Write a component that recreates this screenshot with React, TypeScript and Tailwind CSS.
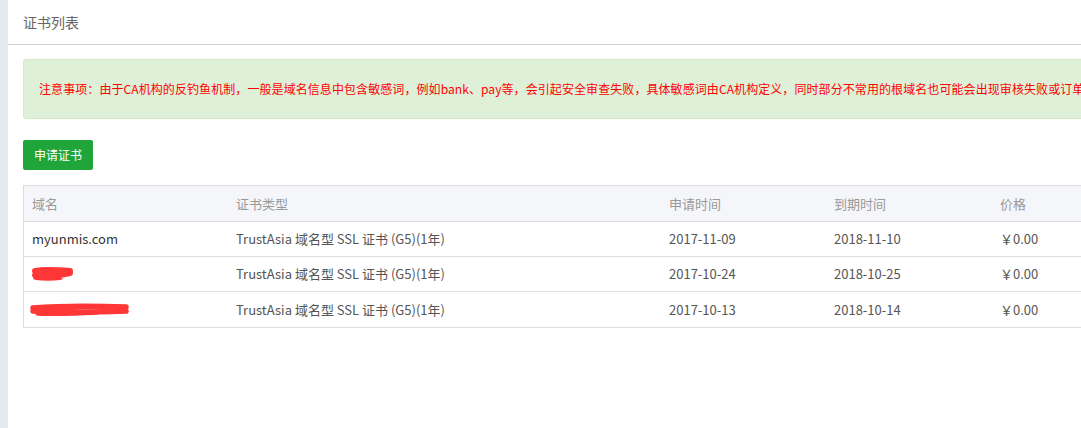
const rows = [
  { domain: "myunmis.com", type: "TrustAsia 域名型 SSL 证书 (G5)(1年)", start: "2017-11-09", end: "2018-11-10", price: "￥0.00", mark: 0 },
  { domain: "", type: "TrustAsia 域名型 SSL 证书 (G5)(1年)", start: "2017-10-24", end: "2018-10-25", price: "￥0.00", mark: 1 },
  { domain: "", type: "TrustAsia 域名型 SSL 证书 (G5)(1年)", start: "2017-10-13", end: "2018-10-14", price: "￥0.00", mark: 2 },
];

const cols = "grid grid-cols-[212px_433px_165px_166px_200px]";

function Scribble({ kind }: { kind: number }) {
  if (kind === 1) {
    return (
      <svg width="46" height="16" viewBox="0 0 46 16" className="block -ml-[2px]">
        <path d="M5 5 C14 3, 28 4, 40 5 M5 9 C16 11, 28 10, 40 7 M6 11 C14 12, 22 12, 30 11" stroke="#ff3636" strokeWidth="6" strokeLinecap="round" fill="none" />
      </svg>
    );
  }
  return (
    <svg width="104" height="16" viewBox="0 0 104 16" className="block -ml-[4px]">
      <path d="M5 6 C30 4, 70 4, 98 5 M5 9 C36 11, 70 10, 98 9 M10 11 C30 12, 50 11, 70 10" stroke="#ff3636" strokeWidth="5.5" strokeLinecap="round" fill="none" />
    </svg>
  );
}

export default function App() {
  return (
    <div className="flex h-[428px] w-[1081px] overflow-hidden bg-white font-['Noto_Sans_CJK_SC',sans-serif]">
      <div className="w-2 shrink-0 bg-[#e6e9ee]" />
      <main className="flex-1 overflow-hidden">
        <header className="h-[45px] border-b border-[#d0d0d0] pl-[15px] flex items-center text-[14px] text-[#666]">
          证书列表
        </header>
        <div className="pl-[15px] pt-[14px]">
          <div className="w-[1200px] h-[60px] rounded-[3px] border border-[#d6e9c6] bg-[#dff0d8] pl-[15px] flex items-center text-[12px] tracking-[0.08px] text-[#ff0000] whitespace-nowrap">
            注意事项：由于CA机构的反钓鱼机制，一般是域名信息中包含敏感词，例如bank、pay等，会引起安全审查失败，具体敏感词由CA机构定义，同时部分不常用的根域名也可能会出现审核失败或订单
          </div>
          <button className="mt-[21px] h-[30px] w-[70px] rounded-[2px] bg-[#20a53a] text-[12px] text-white">
            申请证书
          </button>
          <div className="mt-[15px] w-[1200px] border border-[#ddd] text-[13px]">
            <div className={`${cols} h-[36px] items-center bg-[#f5f6fa] text-[#999] border-b border-[#ddd]`}>
              <div className="pl-[8px]">域名</div>
              <div>证书类型</div>
              <div>申请时间</div>
              <div>到期时间</div>
              <div>价格</div>
            </div>
            {rows.map((r, i) => (
              <div key={i} className={`${cols} h-[35px] items-center text-[#555] ${i < rows.length - 1 ? "border-b border-[#ddd]" : ""}`}>
                <div className="pl-[8px] text-[#333]">
                  {r.mark === 0 ? r.domain : <Scribble kind={r.mark} />}
                </div>
                <div>{r.type}</div>
                <div>{r.start}</div>
                <div>{r.end}</div>
                <div>{r.price}</div>
              </div>
            ))}
          </div>
        </div>
      </main>
    </div>
  );
}
